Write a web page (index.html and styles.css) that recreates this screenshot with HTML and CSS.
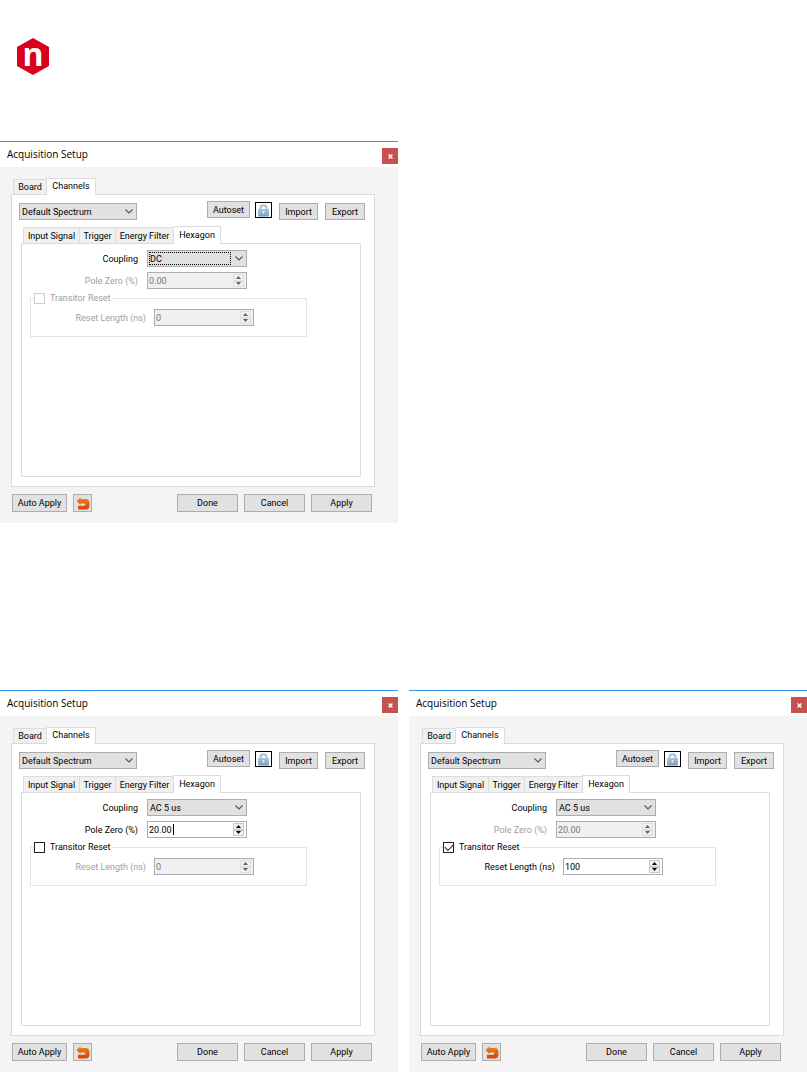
FILE: index.html
```html
<!DOCTYPE html>
<html lang="en">
<head>
<meta charset="utf-8">
<meta name="viewport" content="width=device-width, initial-scale=1">
<title>Acquisition Setup</title>
<link rel="stylesheet" href="styles.css">
</head>
<body>
<svg class="sprite" aria-hidden="true">
  <defs>
    <linearGradient id="undo-fill" x1="0" y1="0" x2="0" y2="1"><stop offset="0" stop-color="#f08a18"/><stop offset="1" stop-color="#d2400c"/></linearGradient>
    <linearGradient id="lock-fill" x1="0" y1="0" x2="0" y2="1"><stop offset="0" stop-color="#a5c4de"/><stop offset="1" stop-color="#7297b8"/></linearGradient>
  </defs>
  <symbol id="chevron" viewBox="0 0 8 5"><path d="M.5 .5 4 4 7.500 .5" fill="none" stroke="#555" stroke-width="1.100"/></symbol>
  <symbol id="up" viewBox="0 0 5 3"><path d="M0 3 2.500 0 5 3z" fill="currentColor"/></symbol>
  <symbol id="down" viewBox="0 0 5 3"><path d="M0 0h5L2.500 3z" fill="currentColor"/></symbol>
  <symbol id="cross" viewBox="0 0 5 5"><path d="M.6 .6 4.400 4.400M4.400 .6 .6 4.400" stroke="#fff" stroke-width="1.400"/></symbol>
  <symbol id="lock" viewBox="0 0 13 13"><path d="M3.500 6V4a3 2.700 0 0 1 6 0V6" fill="none" stroke="#a9c1d6" stroke-width="2"/><rect x="1" y="5" width="11" height="7.500" rx="1" fill="url(#lock-fill)"/><path d="M1 7.500h11M1 10h11" stroke="#a9c6de" stroke-width=".7"/><path d="M6.500 7v2.500" stroke="#eef6fc" stroke-width="1.400"/></symbol>
  <symbol id="undo" viewBox="0 0 14 13"><path d="M.5 4 4.500 .3v1.700H9.500c2.800 0 4 1.500 4 4.200v2.300c0 2.800-1.300 4-4 4H3.300c-.9 0-1.300-.5-1.300-1.300V8.700h5.800c1 0 1.500-.2 1.500-.9s-.5-1.200-1.500-1.200H4.500v1.500z" fill="url(#undo-fill)"/></symbol>
</svg>

<header class="page-header">
  <svg class="logo" viewBox="0 0 32 37" role="img" aria-label="n"><path d="M16 0 32 9v19L16 37 0 28V9z" fill="#d9001b"/><text x="16" y="28" text-anchor="middle" class="logo-letter">n</text></svg>
</header>

<main class="dialogs">
  <section class="dialog">
    <div class="titlebar"><h2>Acquisition Setup</h2><button class="close" aria-label="Close"><svg><use href="#cross"/></svg></button></div>
    <div class="body">
      <div class="tabs outer"><button class="tab">Board</button><button class="tab active">Channels</button></div>
      <div class="panel">
        <div class="toolbar">
          <div class="select spectrum"><select aria-label="Spectrum"><option>Default Spectrum</option></select><svg><use href="#chevron"/></svg></div>
          <button class="btn autoset">Autoset</button><button class="lock" aria-label="Lock"><svg><use href="#lock"/></svg></button><button class="btn port">Import</button><button class="btn port">Export</button>
        </div>
        <div class="tabs inner"><button class="tab">Input Signal</button><button class="tab">Trigger</button><button class="tab">Energy Filter</button><button class="tab active">Hexagon</button></div>
        <div class="page">
          <div class="row"><label for="coupling1">Coupling</label><div class="select focused"><select id="coupling1"><option>DC</option></select><svg><use href="#chevron"/></svg></div></div>
          <div class="row off"><label for="pole1">Pole Zero (%)</label><div class="spin"><input id="pole1" value="0.00" disabled><span class="steps"><button aria-label="Increase" disabled><svg><use href="#up"/></svg></button><button aria-label="Decrease" disabled><svg><use href="#down"/></svg></button></span></div></div>
          <fieldset>
            <legend class="off"><label><input type="checkbox" disabled>Transitor Reset</label></legend>
            <div class="row off"><label for="reset1">Reset Length (ns)</label><div class="spin"><input id="reset1" value="0" disabled><span class="steps"><button aria-label="Increase" disabled><svg><use href="#up"/></svg></button><button aria-label="Decrease" disabled><svg><use href="#down"/></svg></button></span></div></div>
          </fieldset>
        </div>
      </div>
      <div class="footer"><button class="btn auto">Auto Apply</button><button class="btn undo" aria-label="Undo"><svg><use href="#undo"/></svg></button><span class="spacer"></span><button class="btn action">Done</button><button class="btn action">Cancel</button><button class="btn action">Apply</button></div>
    </div>
  </section>

  <section class="dialog second-row">
    <div class="titlebar"><h2>Acquisition Setup</h2><button class="close" aria-label="Close"><svg><use href="#cross"/></svg></button></div>
    <div class="body">
      <div class="tabs outer"><button class="tab">Board</button><button class="tab active">Channels</button></div>
      <div class="panel">
        <div class="toolbar">
          <div class="select spectrum"><select aria-label="Spectrum"><option>Default Spectrum</option></select><svg><use href="#chevron"/></svg></div>
          <button class="btn autoset">Autoset</button><button class="lock" aria-label="Lock"><svg><use href="#lock"/></svg></button><button class="btn port">Import</button><button class="btn port">Export</button>
        </div>
        <div class="tabs inner"><button class="tab">Input Signal</button><button class="tab">Trigger</button><button class="tab">Energy Filter</button><button class="tab active">Hexagon</button></div>
        <div class="page">
          <div class="row"><label for="coupling2">Coupling</label><div class="select"><select id="coupling2"><option>AC 5 us</option></select><svg><use href="#chevron"/></svg></div></div>
          <div class="row"><label for="pole2">Pole Zero (%)</label><div class="spin"><input id="pole2" value="20.00"><span class="caret"></span><span class="steps"><button aria-label="Increase"><svg><use href="#up"/></svg></button><button aria-label="Decrease"><svg><use href="#down"/></svg></button></span></div></div>
          <fieldset>
            <legend><label><input type="checkbox">Transitor Reset</label></legend>
            <div class="row off"><label for="reset2">Reset Length (ns)</label><div class="spin"><input id="reset2" value="0" disabled><span class="steps"><button aria-label="Increase" disabled><svg><use href="#up"/></svg></button><button aria-label="Decrease" disabled><svg><use href="#down"/></svg></button></span></div></div>
          </fieldset>
        </div>
      </div>
      <div class="footer"><button class="btn auto">Auto Apply</button><button class="btn undo" aria-label="Undo"><svg><use href="#undo"/></svg></button><span class="spacer"></span><button class="btn action">Done</button><button class="btn action">Cancel</button><button class="btn action">Apply</button></div>
    </div>
  </section>

  <section class="dialog">
    <div class="titlebar"><h2>Acquisition Setup</h2><button class="close" aria-label="Close"><svg><use href="#cross"/></svg></button></div>
    <div class="body">
      <div class="tabs outer"><button class="tab">Board</button><button class="tab active">Channels</button></div>
      <div class="panel">
        <div class="toolbar">
          <div class="select spectrum"><select aria-label="Spectrum"><option>Default Spectrum</option></select><svg><use href="#chevron"/></svg></div>
          <button class="btn autoset">Autoset</button><button class="lock" aria-label="Lock"><svg><use href="#lock"/></svg></button><button class="btn port">Import</button><button class="btn port">Export</button>
        </div>
        <div class="tabs inner"><button class="tab">Input Signal</button><button class="tab">Trigger</button><button class="tab">Energy Filter</button><button class="tab active">Hexagon</button></div>
        <div class="page">
          <div class="row"><label for="coupling3">Coupling</label><div class="select"><select id="coupling3"><option>AC 5 us</option></select><svg><use href="#chevron"/></svg></div></div>
          <div class="row off"><label for="pole3">Pole Zero (%)</label><div class="spin"><input id="pole3" value="20.00" disabled><span class="steps"><button aria-label="Increase" disabled><svg><use href="#up"/></svg></button><button aria-label="Decrease" disabled><svg><use href="#down"/></svg></button></span></div></div>
          <fieldset>
            <legend><label><input type="checkbox" checked>Transitor Reset</label></legend>
            <div class="row"><label for="reset3">Reset Length (ns)</label><div class="spin"><input id="reset3" value="100"><span class="steps"><button aria-label="Increase"><svg><use href="#up"/></svg></button><button aria-label="Decrease"><svg><use href="#down"/></svg></button></span></div></div>
          </fieldset>
        </div>
      </div>
      <div class="footer"><button class="btn auto">Auto Apply</button><button class="btn undo" aria-label="Undo"><svg><use href="#undo"/></svg></button><span class="spacer"></span><button class="btn action">Done</button><button class="btn action">Cancel</button><button class="btn action">Apply</button></div>
    </div>
  </section>
</main>
</body>
</html>
```
FILE: styles.css
```css
* { box-sizing: border-box; }
body { margin: 0; background: #fff; color: #000; font: 9px/12px Roboto, "Liberation Sans", sans-serif; }
button, input, select { margin: 0; padding: 0; border: 0; border-radius: 0; font: inherit; color: inherit; }
svg { display: block; }
.sprite { position: absolute; width: 0; height: 0; }

.page-header { height: 141px; padding: 38px 17px 0; }
.logo { width: 32px; height: 37px; overflow: visible; }
.logo-letter { font: 700 32px "Open Sans", sans-serif; fill: #fff; }

.dialogs { display: grid; grid-template-columns: 1fr 1fr; column-gap: 11px; row-gap: 167px; }
.second-row { grid-column-start: 1; }
.dialog { min-width: 0; background: #f4f4f4; border-top: 1px solid #3595ee; }
.titlebar { display: flex; justify-content: space-between; height: 25px; padding: 6px 0 0 7px; background: #fff; }
.titlebar h2 { margin: 0; font: 10px/12px "Open Sans", sans-serif; color: #000; }
.close { display: grid; place-items: center; width: 16px; height: 16px; background: #c75050; }
.close svg { width: 5px; height: 5px; }

.body { padding: 11px 23px 11px 11px; }
.tabs { display: flex; align-items: flex-end; position: relative; padding-left: 2px; }
.tab { height: 16px; border: 1px solid #dcdcdc; border-bottom: 0; border-right: 0; background: #f0f0f0; white-space: nowrap; }
.tab.active { height: 18px; margin-bottom: -1px; padding-bottom: 2px; border-right: 1px solid #dcdcdc; background: #fff; }
.outer .tab { width: 33px; height: 15px; }
.outer .tab.active { width: 50px; height: 17px; }
.inner .tab { width: 56px; }
.inner .tab:nth-child(2) { width: 36px; }
.inner .tab:nth-child(3) { width: 58px; }
.inner .tab.active { width: 48px; }

.panel { border: 1px solid #dadada; padding: 6px 13px 9px 9px; background: #fff; }
.toolbar { display: flex; height: 19px; margin: 0 -4px 6px -2px; }
.btn { height: 17px; border: 1px solid #adadad; background: #e1e1e1; white-space: nowrap; }
.autoset { width: 43px; margin-left: auto; }
.lock { display: grid; place-items: center; width: 17px; height: 16px; margin: 1px 7px 0 5px; border: 1px solid #000; background: #fff; }
.lock svg { width: 13px; height: 13px; }
.port { width: 39px; align-self: flex-end; }
.port + .port { width: 40px; margin-left: 7px; }

.select { position: relative; width: 100px; height: 17px; }
.select select { width: 100%; height: 100%; padding-left: 2px; border: 1px solid #adadad; background: #e1e1e1; appearance: none; display: block; }
.select svg { position: absolute; right: 4px; top: 6px; width: 8px; height: 5px; pointer-events: none; }
.select.spectrum { width: 118px; align-self: flex-end; }
.select.focused::after { content: ""; position: absolute; inset: 2px 16px 2px 2px; border: 1px dotted #000; pointer-events: none; }

.page { min-height: 234px; padding: 6px 0; border: 1px solid #dcdcdc; background: #fff; }
.row { display: flex; align-items: center; gap: 9px; margin-bottom: 5px; }
.row > label { width: 116px; text-align: right; white-space: nowrap; }
.off { color: #a0a0a0; }
.spin { position: relative; display: flex; width: 100px; height: 17px; padding: 1px 2px 1px 0; border: 1px solid #abadb3; background: #fff; }
.spin input { flex: 1; min-width: 0; padding-left: 1px; background: transparent; outline: 0; }
.spin input:disabled { color: #777; }
.off .spin { background: #f0f0f0; }
.steps { display: grid; grid-template-rows: 1fr 1fr; width: 11px; }
.steps button { display: grid; place-items: center; border: 1px solid #c8c8c8; background: #f0f0f0; color: #000; }
.steps button:disabled { border-color: #dedede; color: #606060; }
.steps svg { width: 5px; height: 3px; }
.caret { position: absolute; left: 25px; top: 2px; width: 1px; height: 11px; background: #000; }

fieldset { height: 45px; margin: -2px 53px 0 8px; padding: 5px 0 0; border: 1px solid #e4e4e4; }
legend { margin-left: 3px; padding: 0 2px 0 0; }
legend label { display: flex; align-items: center; gap: 5px; }
legend input { appearance: none; width: 11px; height: 11px; border: 1px solid #222; background: #fff; }
legend input:disabled { border-color: #ccc; }
legend input:checked::after { content: ""; display: block; width: 7px; height: 4px; margin: 1px; border: solid #222; border-width: 0 0 1px 1px; transform: rotate(-45deg); }
fieldset .row { gap: 8px; margin: 0; }
fieldset .row > label { width: 115px; }

.footer { display: flex; gap: 6px; padding: 7px 3px 0 1px; }
.footer .btn { height: 18px; }
.spacer { flex: 1; }
.auto { width: 55px; }
.undo { display: grid; place-items: center; width: 19px; }
.undo svg { width: 14px; height: 13px; }
.action { width: 61px; }
```
